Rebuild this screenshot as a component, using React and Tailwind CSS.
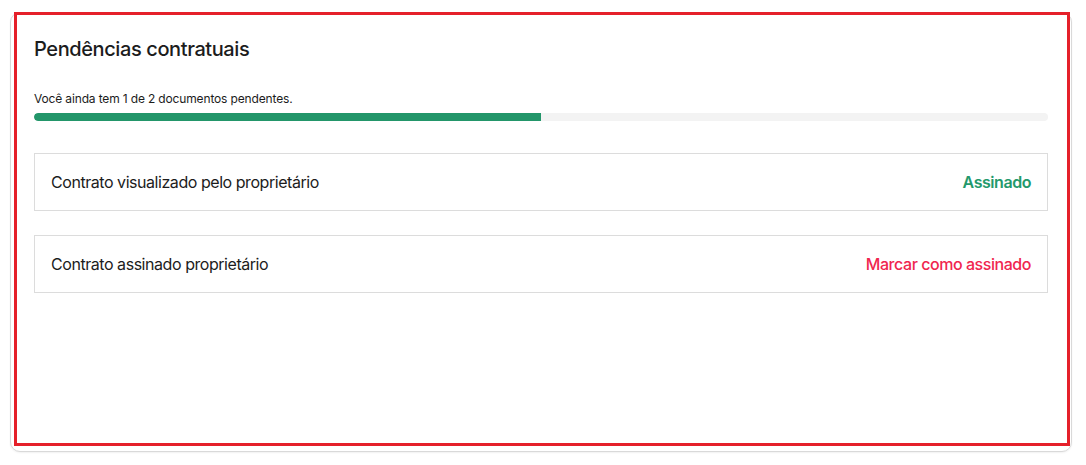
import React from "react";

export default function App() {
  const rows = [
    { label: "Contrato visualizado pelo proprietário", action: "Assinado", done: true },
    { label: "Contrato assinado proprietário", action: "Marcar como assinado", done: false },
  ];
  return (
    <div className="w-[1086px] h-[465px] bg-white pl-[10px] pt-[12px]" style={{ fontFamily: "Inter, 'Noto Sans', sans-serif" }}>
      <div className="relative w-[1062px] h-[440px] rounded-[10px] border border-[#d9d9d9] bg-white shadow-[0_1px_2px_rgba(0,0,0,0.06)] px-[23px] pt-[22px]">
        <h2 className="text-[20px] leading-[28px] font-medium text-[#1c1c1c] tracking-[-0.4px]">Pendências contratuais</h2>
        <p className="mt-[28px] text-[12px] leading-[16px] text-[#1c1c1c] tracking-[-0.15px]">Você ainda tem 1 de 2 documentos pendentes.</p>
        <div className="mt-[6px] h-[8px] w-full rounded-full bg-[#f3f3f3] overflow-hidden">
          <div className="h-full w-1/2 bg-[#23966a] rounded-l-full" />
        </div>
        <div className="mt-[32px] flex flex-col gap-[24px]">
          {rows.map((r) => (
            <div key={r.label} className="h-[58px] border border-[#dcdcdc] flex items-center justify-between px-[16px]">
              <span className="text-[16px] text-[#1c1c1c] tracking-[-0.45px]">{r.label}</span>
              <span className={`text-[16px] tracking-[-0.45px] ${r.done ? "font-semibold text-[#23996b]" : "font-medium text-[#f0264f]"}`}>{r.action}</span>
            </div>
          ))}
        </div>
        <div className="absolute left-[3px] top-[-1px] w-[1056px] h-[434px] border-[3px] border-[#e5202a] pointer-events-none" />
      </div>
    </div>
  );
}
